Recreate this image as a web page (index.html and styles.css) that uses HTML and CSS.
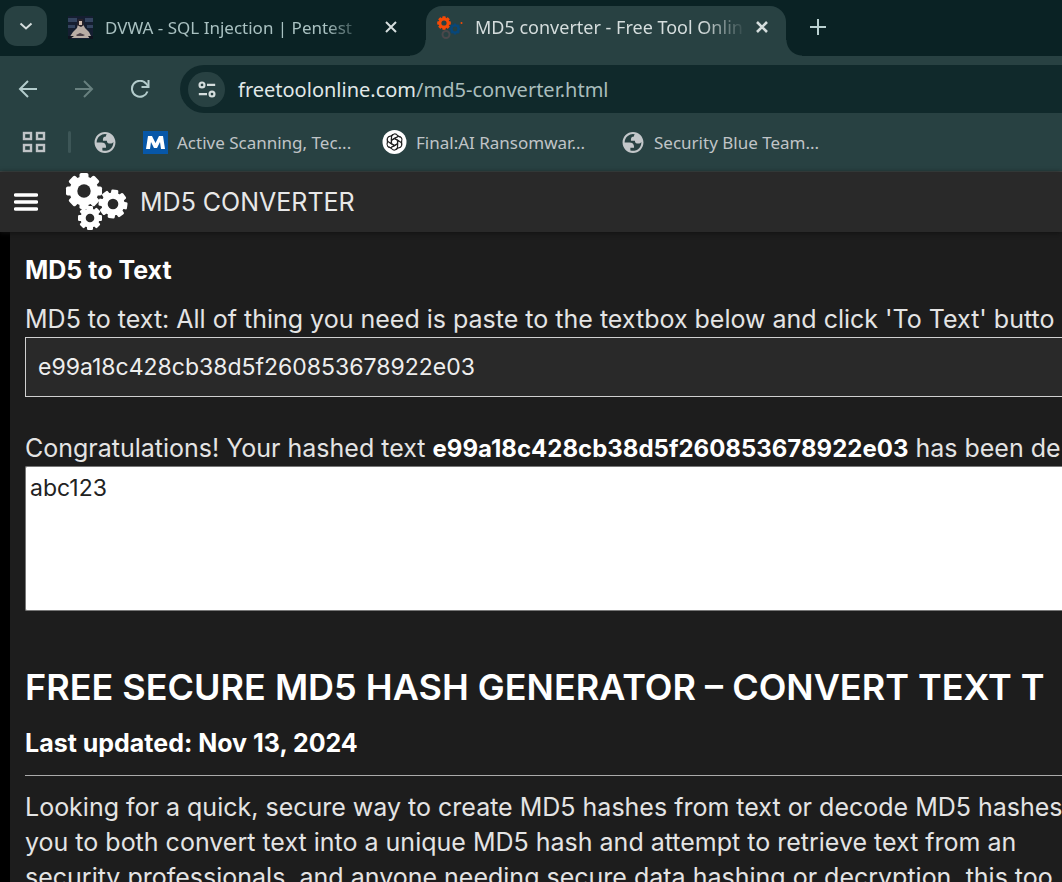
FILE: index.html
```html
<!DOCTYPE html>
<html lang="en">
<head>
<meta charset="utf-8">
<title>MD5 converter - Free Tool Online</title>
<link rel="stylesheet" href="styles.css">
</head>
<body>
<svg class="defs" aria-hidden="true">
  <defs>
    <g id="gear">
      <g id="teeth">
        <rect x="-5" y="-20" width="10" height="40" rx="2"/>
        <rect x="-20" y="-5" width="40" height="10" rx="2"/>
      </g>
      <use href="#teeth" transform="rotate(45)"/>
      <circle r="16"/>
    </g>
    <path id="globe" fill="#c3c7ca" fill-rule="evenodd" d="M12 2C6.480 2 2 6.480 2 12s4.480 10 10 10 10-4.480 10-10S17.520 2 12 2zM4 12h4.400c3.407.022 4.922 1.730 4.543 5.127H9.488v2.470a8.004 8.004 0 0 0 10.498-8.083C19.327 12.504 18.332 13 17 13c-2.137 0-3.206-.916-3.206-2.750h-3.748c-.274-2.728.683-4.092 2.870-4.092 0-.975.327-1.597.811-1.970A8.004 8.004 0 0 0 4 12z"/>
  </defs>
</svg>
<div class="window">
  <div class="tabstrip">
    <button class="tab-search" aria-label="Search tabs">
      <svg width="16" height="16" viewBox="0 0 16 16"><path d="M2.500 5.500 8 10.500 13.500 5.500" fill="none" stroke="currentColor" stroke-width="2"/></svg>
    </button>
    <div class="tab">
      <svg class="favicon" width="25" height="23" viewBox="0 0 25 23">
        <rect width="25" height="23" fill="#151e31"/>
        <path d="M0 2h9v4H0zM17 2h8v4h-8zM0 9h7v3H0zM19 9h6v3h-6z" fill="#34445f"/>
        <path d="M1 22 5 16 9 12 10 8 15 8 17 12 21 16 24 22Z" fill="#b9ada5"/>
        <path d="M10 3h5l1 6-3 2-4-2z" fill="#28222a"/>
        <path d="M11 5h3v4h-3z" fill="#d2bdb0"/>
        <path d="M8 19 12 17 17 19 15 20 9 20Z" fill="#4c4148"/>
        <path d="M0 20 6 20 2 23 0 23ZM20 20 25 20 25 23 22 23Z" fill="#10131e"/>
      </svg>
      <span class="tab-title">DVWA - SQL Injection | Pentest</span>
      <button class="close" aria-label="Close tab"><svg width="14" height="14" viewBox="0 0 14 14"><path d="M2 2 12 12M12 2 2 12" stroke="currentColor" stroke-width="2"/></svg></button>
    </div>
    <div class="tab active">
      <svg class="favicon" width="26" height="23" viewBox="0 0 26 23">
        <use href="#gear" transform="translate(7 7) scale(.34)" fill="#f64a06"/><circle cx="7" cy="7" r="2.600" fill="#284142"/>
        <use href="#gear" transform="translate(18 13) scale(.28)" fill="#08477a"/><circle cx="18" cy="13" r="2.400" fill="#284142"/>
        <circle cx="9" cy="18.500" r="3.500" fill="none" stroke="#4a484b" stroke-width="2"/><circle cx="24.500" cy="7" r="1" fill="#f64a06"/>
      </svg>
      <span class="tab-title">MD5 converter - Free Tool Onlin</span>
      <button class="close" aria-label="Close tab"><svg width="14" height="14" viewBox="0 0 14 14"><path d="M2 2 12 12M12 2 2 12" stroke="currentColor" stroke-width="2.600"/></svg></button>
    </div>
    <button class="new-tab" aria-label="New tab"><svg width="16" height="16" viewBox="0 0 16 16"><path d="M8 0V16M0 8H16" stroke="currentColor" stroke-width="2"/></svg></button>
  </div>

  <div class="toolbar">
    <button class="nav" aria-label="Back"><svg width="20" height="18" viewBox="0 0 20 18"><path d="M19 9H2M10 1 2 9 10 17" fill="none" stroke="currentColor" stroke-width="2"/></svg></button>
    <button class="nav" aria-label="Forward" disabled><svg width="20" height="18" viewBox="0 0 20 18"><path d="M1 9H18M10 1 18 9 10 17" fill="none" stroke="currentColor" stroke-width="2"/></svg></button>
    <button class="nav" aria-label="Reload"><svg width="20" height="18" viewBox="0 0 20 18"><path d="M17.500 11.500A8 8 0 1 1 16 3.500L18 6" fill="none" stroke="currentColor" stroke-width="2"/><path d="M18.500 0V7H11.500" fill="none" stroke="currentColor" stroke-width="2"/></svg></button>
    <div class="omnibox">
      <button class="site-info" aria-label="View site information"><svg width="20" height="17" viewBox="0 0 22 18"><g fill="none" stroke="currentColor" stroke-width="2.400"><circle cx="5.500" cy="4" r="2.700"/><circle cx="16.500" cy="14" r="2.700"/><path d="M11 4H20M2 14H11"/></g></svg></button>
      <div class="url">freetoolonline.com<span>/md5-converter.html</span></div>
    </div>
  </div>

  <nav class="bookmarks" aria-label="Bookmarks">
    <button class="apps" aria-label="Tab groups"><svg width="24" height="22" viewBox="0 0 24 22"><g fill="none" stroke="currentColor" stroke-width="2.400"><rect x="2" y="2" width="7" height="6"/><rect x="15" y="2" width="7" height="6"/><rect x="2" y="14" width="7" height="6"/><rect x="15" y="14" width="7" height="6"/></g></svg></button>
    <span class="divider"></span>
    <a class="bookmark icon-only" href="#" aria-label="Bookmark"><svg width="24" height="23" viewBox="1 1 22 22"><use href="#globe"/></svg></a>
    <a class="bookmark" href="#"><svg width="25" height="23" viewBox="0 0 25 23"><rect width="25" height="23" fill="#0757a8"/><path d="M3 18 5 5H9L12.500 12 16 5H20L22 18H18L17 11 14 17H11L8 11 7 18Z" fill="#fff"/></svg>Active Scanning, Tec...</a>
    <a class="bookmark" href="#"><svg width="25" height="24" viewBox="0 0 25 24"><circle cx="12.500" cy="12" r="12" fill="#fff"/><g transform="translate(12.500 12)" fill="none" stroke="#222" stroke-width="1.200"><g id="petal"><path d="M-3 -1.800V-5.500A3.300 3.300 0 0 1 3 -6.500L6 -4.700M-3 -1.800 0 -3.500 4.500 -1"/></g><use href="#petal" transform="rotate(60)"/><use href="#petal" transform="rotate(120)"/><use href="#petal" transform="rotate(180)"/><use href="#petal" transform="rotate(240)"/><use href="#petal" transform="rotate(300)"/></g></svg>Final:AI Ransomwar...</a>
    <a class="bookmark" href="#"><svg width="24" height="23" viewBox="1 1 22 22"><use href="#globe"/></svg>Security Blue Team...</a>
  </nav>

  <header class="site-header">
    <button class="menu" aria-label="Menu"><svg width="24" height="18" viewBox="0 0 24 18"><path d="M1.500 2H22.500M1.500 9H22.500M1.500 16H22.500" stroke="#fff" stroke-width="3.400" stroke-linecap="round"/></svg></button>
    <svg class="logo" width="64" height="60" viewBox="0 0 64 60">
      <g fill="#fff">
        <use href="#gear" transform="translate(19 19) scale(.9)"/>
        <use href="#gear" transform="translate(48 32) rotate(8) scale(.72)"/>
        <use href="#gear" transform="translate(25 46) scale(.6)"/>
      </g>
      <g fill="#292929"><circle cx="19" cy="19" r="6.700"/><circle cx="48" cy="32" r="5.300"/><circle cx="25" cy="46" r="4.300"/></g>
    </svg>
    <span class="site-title">MD5 CONVERTER</span>
  </header>

  <main class="content">
    <h2>MD5 to Text</h2>
    <label class="line" for="hash">MD5 to text: All of thing you need is paste to the textbox below and click 'To Text' butto</label>
    <input id="hash" class="hash" type="text" value="e99a18c428cb38d5f260853678922e03">
    <label class="line result-label" for="result">Congratulations! Your hashed text <b>e99a18c428cb38d5f260853678922e03</b> has been de</label>
    <textarea id="result" class="result">abc123</textarea>
    <h1>FREE SECURE MD5 HASH GENERATOR – CONVERT TEXT T</h1>
    <h3>Last updated: Nov 13, 2024</h3>
    <hr>
    <p class="line">Looking for a quick, secure way to create MD5 hashes from text or decode MD5 hashes<br>you to both convert text into a unique MD5 hash and attempt to retrieve text from an<br>security professionals, and anyone needing secure data hashing or decryption, this too</p>
  </main>
</div>
</body>
</html>
```

FILE: styles.css
```css
* { box-sizing: border-box; }
body { margin: 0; background: #000; }
button { border: 0; padding: 0; background: none; color: inherit; display: grid; place-items: center; flex: none; }
svg { display: block; flex: none; }
.defs { position: absolute; width: 0; height: 0; }

.window {
  height: 100vh;
  overflow: hidden;
  display: flex;
  flex-direction: column;
  font-family: "Noto Sans", sans-serif;
  font-size: 17px;
  color: #d5dddd;
}
.window > * { flex: none; }

.tabstrip {
  height: 56px;
  padding: 6px 0 0 4px;
  display: flex;
  background: #0a2224;
}
.tab-search { width: 43px; height: 40px; margin-right: 10px; border-radius: 13px; background: #284142; }
.tab { width: 358px; height: 50px; padding: 0 16px 8px 11px; display: flex; align-items: center; color: #a9c1c1; }
.tab:not(.active) { margin-right: 11px; }
.tab-title {
  flex: 1;
  margin: 0 16px 0 12px;
  overflow: hidden;
  white-space: nowrap;
  mask-image: linear-gradient(to right, #000 84%, transparent);
}
.close { width: 16px; height: 24px; color: #d5dddd; }
.active {
  position: relative;
  width: 360px;
  border-radius: 16px 16px 0 0;
  background: #284142;
  color: #d5dddd;
  font-size: 18px;
}
.active .tab-title { margin-right: 8px; }
.active::before, .active::after { content: ""; position: absolute; bottom: 0; width: 16px; height: 16px; }
.active::before { right: 100%; background: radial-gradient(circle at 0 0, transparent 15px, #284142 16px); }
.active::after { left: 100%; background: radial-gradient(circle at 100% 0, transparent 15px, #284142 16px); }
.new-tab { width: 64px; height: 42px; color: #b9d0d0; }

.toolbar { height: 64px; padding-top: 2px; display: flex; align-items: center; background: #284142; }
.nav { width: 56px; height: 48px; color: #b3cccc; }
.nav:disabled { color: #68807f; }
.omnibox {
  flex: 1;
  height: 48px;
  margin-left: 12px;
  padding-left: 8px;
  display: flex;
  align-items: center;
  gap: 13px;
  border-radius: 24px 0 0 24px;
  background: #10292b;
}
.site-info { width: 37px; height: 35px; border-radius: 18px; background: #284142; }
.url { font-size: 20px; color: #e0e8e8; }
.url span { color: #a9bdbd; }

.bookmarks {
  height: 52px;
  padding: 0 22px 7px;
  display: flex;
  align-items: center;
  background: #284142;
  border-bottom: 1px solid #404948;
  color: #c0c4c7;
}
.divider { width: 3px; height: 22px; margin: 0 22px; border-radius: 2px; background: #3d5657; }
.bookmark { display: flex; align-items: center; gap: 9px; min-width: 213px; margin-right: 26px; color: inherit; text-decoration: none; white-space: nowrap; }
.icon-only { min-width: 0; }

.site-header {
  height: 60px;
  padding-left: 14px;
  display: flex;
  align-items: center;
  background: #292929;
  color: #e8e8e8;
  font-family: Inter, sans-serif;
  box-shadow: 0 1px 5px #111;
  position: relative;
}
.logo { margin: 0 11px 0 27px; }
.site-title { font-size: 25px; }

.content {
  margin-left: 10px;
  padding: 23px 0 0 15px;
  background: #1d1d1d;
  color: #e4e4e4;
  font-family: Inter, sans-serif;
  font-size: 25px;
}
h1, h2, h3, p { margin: 0; white-space: nowrap; }
h1, h2, h3, b { color: #fff; }
b { font-size: 24px; line-height: 24px; }
h2, h3 { font-size: 25px; line-height: 30px; font-weight: 700; }
h2 { margin-bottom: 17px; }
.line { display: block; line-height: 35px; white-space: nowrap; }
.hash, .result { display: block; width: 100%; font-family: inherit; font-size: 23px; outline: 0; }
.hash {
  height: 60px;
  padding: 0 12px;
  border: 1px solid #d0d0d0;
  border-right: 0;
  background: #292929;
  color: #eee;
}
.result-label { margin-top: 34px; }
.result {
  height: 145px;
  padding: 5px 4px;
  border: 1px solid #777;
  border-right: 0;
  border-radius: 2px 0 0 2px;
  background: #fff;
  color: #222;
  line-height: 32px;
  resize: none;
}
h1 { margin: 56px 0 21px; font-size: 36px; line-height: 40px; font-weight: 600; }
hr { height: 1px; margin: 17px 0 14px; border: 0; background: #aaa; }
```
